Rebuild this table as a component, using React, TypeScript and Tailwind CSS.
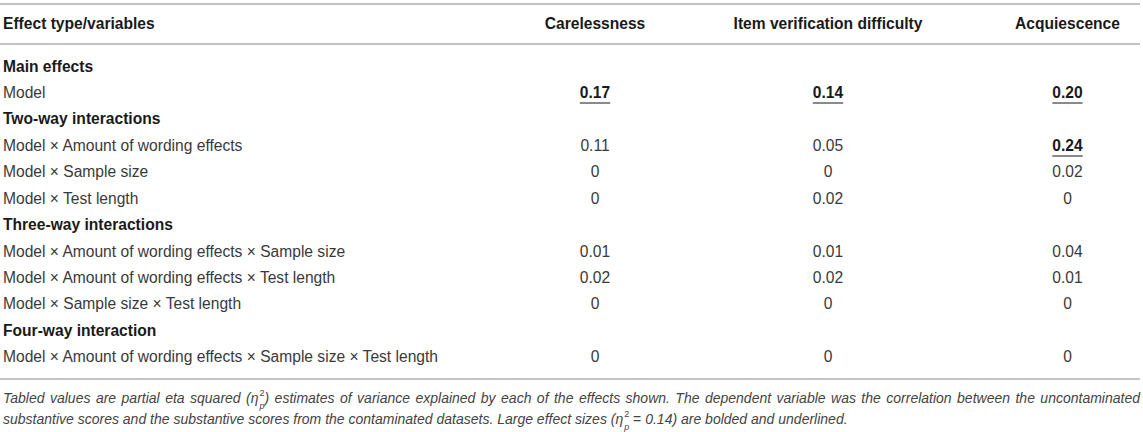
import React from "react";

type Row =
  | { kind: "group"; label: string }
  | { kind: "data"; label: string; values: [string, string, string]; strong?: boolean[] };

const rows: Row[] = [
  { kind: "group", label: "Main effects" },
  { kind: "data", label: "Model", values: ["0.17", "0.14", "0.20"], strong: [true, true, true] },
  { kind: "group", label: "Two-way interactions" },
  { kind: "data", label: "Model × Amount of wording effects", values: ["0.11", "0.05", "0.24"], strong: [false, false, true] },
  { kind: "data", label: "Model × Sample size", values: ["0", "0", "0.02"] },
  { kind: "data", label: "Model × Test length", values: ["0", "0.02", "0"] },
  { kind: "group", label: "Three-way interactions" },
  { kind: "data", label: "Model × Amount of wording effects × Sample size", values: ["0.01", "0.01", "0.04"] },
  { kind: "data", label: "Model × Amount of wording effects × Test length", values: ["0.02", "0.02", "0.01"] },
  { kind: "data", label: "Model × Sample size × Test length", values: ["0", "0", "0"] },
  { kind: "group", label: "Four-way interaction" },
  { kind: "data", label: "Model × Amount of wording effects × Sample size × Test length", values: ["0", "0", "0"] },
];

const grid = "grid grid-cols-[478px_234px_232px_1fr] items-center";

// η with stacked superscript 2 and subscript p, kept off the line box
function Eta() {
  return (
    <span className="relative inline-block pr-[6px]">
      η
      <span className="absolute right-0 top-[1px] text-[9px] leading-none not-italic">2</span>
      <span className="absolute right-0 bottom-[-2px] text-[9px] leading-none">p</span>
    </span>
  );
}

function Cell({ value, strong, last }: { value: string; strong?: boolean; last?: boolean }) {
  return (
    <div className={`text-center ${last ? "pl-[51px]" : ""}`}>
      {strong ? (
        <span className="font-bold text-[#1a1a1a] underline decoration-[#8a8a8a] decoration-[1.5px] underline-offset-[4px]">
          {value}
        </span>
      ) : (
        value
      )}
    </div>
  );
}

export default function App() {
  return (
    <div className="w-[1143px] h-[432px] overflow-hidden bg-white text-[15.6px] text-[#3a3a3a] font-['Liberation_Sans',Arial,sans-serif]">
      <div className="pt-[3px] pr-[3px]">
        <div className="border-t-2 border-b-2 border-[#c4c4c4]">
          <div className={`${grid} h-[38px] font-bold text-[#1a1a1a]`}>
            <div className="pl-[3px]">Effect type/variables</div>
            <div className="text-center">Carelessness</div>
            <div className="text-center">Item verification difficulty</div>
            <div className="text-center pl-[51px]">Acquiescence</div>
          </div>
        </div>

        <div className="border-b-2 border-[#c4c4c4] py-[8px]">
          {rows.map((r, i) =>
            r.kind === "group" ? (
              <div key={i} className="h-[26.45px] flex items-center pl-[3px] font-bold text-[#1a1a1a]">
                {r.label}
              </div>
            ) : (
              <div key={i} className={`${grid} h-[26.45px]`}>
                <div className="pl-[3px]">{r.label}</div>
                <Cell value={r.values[0]} strong={r.strong?.[0]} />
                <Cell value={r.values[1]} strong={r.strong?.[1]} />
                <Cell value={r.values[2]} strong={r.strong?.[2]} last />
              </div>
            )
          )}
        </div>

        <div className="pt-[8px] pl-[3px] italic text-[14px] leading-[21px] text-[#444]">
          <div className="[text-align-last:justify]">
            Tabled values are partial eta squared (<Eta />) estimates of variance explained by each of the effects shown. The dependent variable was the correlation between the uncontaminated
          </div>
          <div>
            substantive scores and the substantive scores from the contaminated datasets. Large effect sizes (<Eta /> <span className="not-italic">=</span> 0.14) are bolded and underlined.
          </div>
        </div>
      </div>
    </div>
  );
}
